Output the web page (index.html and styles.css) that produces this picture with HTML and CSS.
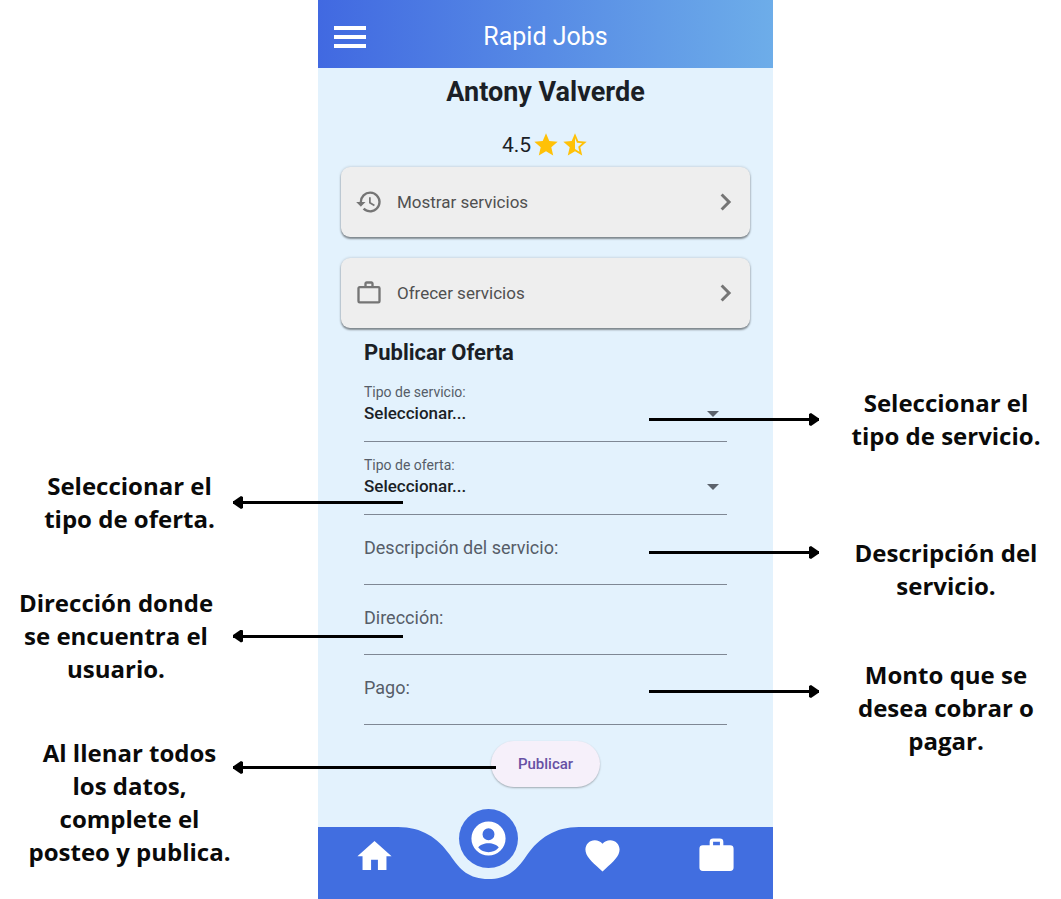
FILE: index.html
```html
<!DOCTYPE html>
<html lang="es">
<head>
<meta charset="utf-8">
<meta name="viewport" content="width=device-width, initial-scale=1">
<title>Rapid Jobs</title>
<link rel="stylesheet" href="styles.css">
</head>
<body>
<div class="guide">
  <aside class="notes notes-left">
    <div class="note note-offer">
      <p class="note-text">Seleccionar el<br>tipo de oferta.</p>
      <span class="arrow arrow-left"></span>
    </div>
    <div class="note note-address">
      <p class="note-text">Dirección donde<br>se encuentra el<br>usuario.</p>
      <span class="arrow arrow-left"></span>
    </div>
    <div class="note note-publish">
      <p class="note-text">Al llenar todos<br>los datos,<br>complete el<br>posteo y publica.</p>
      <span class="arrow arrow-left arrow-long"></span>
    </div>
  </aside>

  <main class="phone">
    <header class="topbar">
      <button class="menu" type="button" aria-label="Menú"><span class="bar"></span><span class="bar"></span><span class="bar"></span></button>
      <h1 class="brand">Rapid Jobs</h1>
    </header>

    <section class="profile">
      <h2 class="name">Antony Valverde</h2>
      <div class="rating">
        <span>4.5</span>
        <svg class="star" viewBox="0 0 24 24"><path d="M12 17.27 18.18 21l-1.64-7.03L22 9.24l-7.19-.61L12 2 9.19 8.63 2 9.24l5.46 4.73L5.82 21z"/></svg>
        <svg class="star" viewBox="0 0 24 24"><path d="m22 9.24-7.19-.62L12 2 9.19 8.63 2 9.24l5.46 4.73L5.82 21 12 17.27 18.18 21l-1.63-7.03L22 9.24zM12 15.4V6.1l1.71 4.04 4.38.38-3.32 2.88 1 4.28L12 15.4z"/></svg>
      </div>
    </section>

    <section class="cards">
      <button class="card" type="button">
        <svg class="card-icon" viewBox="0 0 24 24"><path d="M13 3a9 9 0 0 0-9 9H1l3.89 3.89.07.14L9 12H6a7 7 0 1 1 7 7 6.9 6.9 0 0 1-4.94-2.06l-1.42 1.42A9 9 0 1 0 13 3zm-1 5v5l4.28 2.54.72-1.21-3.5-2.08V8H12z"/></svg>
        <span class="card-label">Mostrar servicios</span>
        <svg class="chevron" viewBox="0 0 24 24"><path d="M5.500 19.700 8 22.200 18.200 12 8 1.800 5.500 4.300 13.200 12z"/></svg>
      </button>
      <button class="card" type="button">
        <svg class="card-icon" viewBox="0 0 24 24"><path fill-rule="evenodd" d="M14 6V4h-4v2h4zM4 8v11h16V8H4zm16-2a2 2 0 0 1 2 2v11a2 2 0 0 1-2 2H4a2 2 0 0 1-2-2V8c0-1.110.89-2 2-2h4V4c0-1.110.89-2 2-2h4c1.110 0 2 .89 2 2v2h4z"/></svg>
        <span class="card-label">Ofrecer servicios</span>
        <svg class="chevron" viewBox="0 0 24 24"><path d="M5.500 19.700 8 22.200 18.200 12 8 1.800 5.500 4.300 13.200 12z"/></svg>
      </button>
    </section>

    <form class="offer">
      <h3 class="offer-title">Publicar Oferta</h3>
      <div class="fields">
        <div class="select-field">
          <label class="small-label" for="servicio">Tipo de servicio:</label>
          <div class="select-wrap">
            <select class="select" id="servicio"><option>Seleccionar...</option></select>
            <span class="caret"></span>
          </div>
        </div>
        <div class="select-field">
          <label class="small-label" for="oferta">Tipo de oferta:</label>
          <div class="select-wrap">
            <select class="select" id="oferta"><option>Seleccionar...</option></select>
            <span class="caret"></span>
          </div>
        </div>
        <div class="text-field">
          <label class="label" for="descripcion">Descripción del servicio:</label>
          <input class="input" id="descripcion" type="text">
        </div>
        <div class="text-field">
          <label class="label" for="direccion">Dirección:</label>
          <input class="input" id="direccion" type="text">
        </div>
        <div class="text-field">
          <label class="label" for="pago">Pago:</label>
          <input class="input" id="pago" type="text">
        </div>
      </div>
      <button class="publish" type="button">Publicar</button>
    </form>

    <nav class="tabs">
      <svg class="tabs-shape" viewBox="0 0 455 72" preserveAspectRatio="none"><path d="M0 0H80C104 0 120 11 132 28C142 43 151 52 170.500 52C190 52 199 43 209 28C221 11 237 0 261 0H455V72H0Z"/></svg>
      <a class="tab" href="#" aria-label="Inicio"><svg viewBox="0 0 24 24"><path d="M10 20.500v-6h4v6h5v-8h3L12 3.500 2 12.500h3v8z"/></svg></a>
      <a class="tab tab-active" href="#" aria-label="Perfil"><span class="bubble"><svg viewBox="0 0 24 24"><path fill-rule="evenodd" d="M12 2a10 10 0 1 0 0 20 10 10 0 0 0 0-20zm0 4a3.500 3.500 0 1 1 0 7 3.500 3.500 0 0 1 0-7zm0 14a8 8 0 0 1-6-2.700c.9-1.500 3.400-2.500 6-2.500s5.100 1 6 2.500A8 8 0 0 1 12 20z"/></svg></span></a>
      <a class="tab" href="#" aria-label="Favoritos"><svg viewBox="0 0 24 24"><path d="m12 21.350-1.450-1.320C5.400 15.360 2 12.280 2 8.500 2 5.420 4.420 3 7.500 3c1.740 0 3.410.81 4.500 2.090C13.090 3.810 14.760 3 16.500 3 19.580 3 22 5.420 22 8.500c0 3.780-3.400 6.860-8.550 11.540L12 21.350z"/></svg></a>
      <a class="tab" href="#" aria-label="Trabajos"><svg viewBox="0 0 24 24"><path fill-rule="evenodd" d="M20 6h-4V4a2 2 0 0 0-2-2h-4a2 2 0 0 0-2 2v2H4a2 2 0 0 0-2 2v11a2 2 0 0 0 2 2h16a2 2 0 0 0 2-2V8a2 2 0 0 0-2-2zm-6 0h-4V4h4v2z"/></svg></a>
    </nav>
  </main>

  <aside class="notes notes-right">
    <div class="note note-service">
      <span class="arrow arrow-right"></span>
      <p class="note-text">Seleccionar el tipo de servicio.</p>
    </div>
    <div class="note note-description">
      <span class="arrow arrow-right"></span>
      <p class="note-text">Descripción del servicio.</p>
    </div>
    <div class="note note-payment">
      <span class="arrow arrow-right"></span>
      <p class="note-text">Monto que se desea cobrar o pagar.</p>
    </div>
  </aside>
</div>
</body>
</html>
```

FILE: styles.css
```css
* {
  box-sizing: border-box;
}

body {
  margin: 0;
  background: #fff;
  font-family: Roboto, "Liberation Sans", sans-serif;
  color: #1b1f26;
}

h1, h2, h3, p {
  margin: 0;
}

button, select, input {
  font: inherit;
  color: inherit;
}

svg {
  display: block;
  fill: currentColor;
}

.guide {
  display: grid;
  grid-template-columns: 318fr 455fr 288fr;
  min-height: 100vh;
}

/* Side notes */

.notes {
  display: flex;
  flex-direction: column;
  min-width: 0;
}

.notes-left {
  gap: 51px;
  padding: 469px 86px 0 0;
}

.notes-right {
  padding: 386px 12px 0 70px;
}

.note {
  position: relative;
}

.notes-left .note {
  padding: 0 0 0 27px;
}

.notes-left .note-address {
  padding: 0;
}

.note-description {
  margin-top: 84px;
}

.note-payment {
  margin-top: 56px;
}

.note-text {
  font: 700 24px/33px "Open Sans", "Noto Sans", sans-serif;
  color: #0a0a0a;
  text-align: center;
}

.arrow {
  position: absolute;
  z-index: 2;
  top: 50%;
  width: 170px;
  height: 3px;
  margin-top: -1px;
  background: #000;
}

.arrow::after {
  content: "";
  position: absolute;
  top: -5px;
  width: 10px;
  height: 13px;
  background: #000;
}

.arrow-left {
  left: 233px;
}

.arrow-left::after {
  left: 0;
  clip-path: polygon(0 42%, 80% 0, 100% 8%, 100% 92%, 80% 100%, 0 58%);
}

.arrow-right {
  right: 230px;
}

.arrow-right::after {
  right: 0;
  clip-path: polygon(100% 42%, 20% 0, 0 8%, 0 92%, 20% 100%, 100% 58%);
}

.arrow-long {
  width: 263px;
}

.note-publish .arrow {
  top: 31px;
}

.note-description .arrow {
  top: 16px;
}

.note-payment .arrow {
  top: 33px;
}

.notes-left .note-offer .note-text,
.notes-left .note-publish .note-text {
  white-space: nowrap;
}

/* App screen */

.phone {
  display: flex;
  flex-direction: column;
  min-width: 0;
  background: #e3f2fd;
}

.topbar {
  display: grid;
  grid-template-columns: 32px 1fr 32px;
  align-items: center;
  height: 68px;
  padding: 5px 16px 0;
  background: linear-gradient(90deg, #4169e1, #6dade9);
  color: #fff;
}

.menu {
  display: grid;
  gap: 5px;
  padding: 0;
  border: 0;
  background: none;
}

.bar {
  height: 4px;
  background: #fff;
}

.brand {
  font-size: 25px;
  font-weight: 400;
  line-height: 32px;
  text-align: center;
}

.profile {
  padding-top: 8px;
  text-align: center;
}

.name {
  font-size: 27px;
  font-weight: 700;
  line-height: 32px;
}

.rating {
  display: flex;
  justify-content: center;
  align-items: center;
  gap: 1px;
  height: 24px;
  margin-top: 25px;
  font-size: 21px;
}

.star {
  width: 28px;
  height: 28px;
  color: #ffc107;
}

.cards {
  display: grid;
  gap: 21px;
  padding: 10px 23px 0;
}

.card {
  display: flex;
  align-items: center;
  gap: 14px;
  height: 70px;
  padding: 0 12px 0 14px;
  border: 0;
  border-radius: 9px;
  background: #eee;
  box-shadow: 0 2px 2px rgba(0, 0, 0, .4), 0 0 3px rgba(0, 0, 0, .2);
  color: #505050;
  font-size: 17px;
  text-align: left;
}

.card-icon {
  width: 28px;
  height: 28px;
  color: #757575;
}

.card-label {
  flex: 1;
}

.chevron {
  width: 20px;
  height: 20px;
  margin-right: 2px;
  color: #757575;
}

.offer {
  display: flex;
  flex-direction: column;
  padding: 13px 46px 24px;
}

.offer-title {
  font-size: 22px;
  font-weight: 700;
  line-height: 24px;
}

.fields {
  display: grid;
  gap: 15px;
  margin-top: 19px;
}

.select-field,
.text-field {
  display: grid;
}

.text-field {
  padding-top: 6px;
}

.small-label {
  color: #565d68;
  font-size: 14px;
  line-height: 16px;
}

.label {
  color: #565d68;
  font-size: 18px;
  line-height: 24px;
}

.select-wrap {
  position: relative;
  display: grid;
}

.select,
.input {
  width: 100%;
  padding: 0;
  border: 0;
  border-bottom: 1px solid #7f8894;
  border-radius: 0;
  outline: 0;
  background: none;
}

.select {
  appearance: none;
  height: 42px;
  padding-bottom: 16px;
  font-size: 17px;
  font-weight: 500;
}

.input {
  height: 25px;
  font-size: 18px;
}

.caret {
  position: absolute;
  top: 11px;
  right: 8px;
  border: 6px solid transparent;
  border-top-color: #5c636c;
  border-bottom: 0;
  pointer-events: none;
}

.publish {
  align-self: center;
  height: 46px;
  margin-top: 16px;
  padding: 0 27px;
  border: 0;
  border-radius: 23px;
  background: #f6f0fa;
  box-shadow: 0 1px 2px rgba(0, 0, 0, .3);
  color: #6750a4;
  font-size: 15px;
  font-weight: 500;
}

.tabs {
  position: relative;
  display: grid;
  grid-template-columns: repeat(4, 1fr);
  height: 72px;
  margin-top: auto;
}

.tabs-shape {
  position: absolute;
  inset: 0;
  width: 100%;
  height: 100%;
  color: #416ee0;
}

.tab {
  position: relative;
  display: grid;
  place-items: center;
  align-content: start;
  padding-top: 8px;
  color: #fff;
}

.tab svg {
  width: 41px;
  height: 41px;
}

.tab-active {
  padding-top: 0;
}

.bubble {
  display: grid;
  place-items: center;
  width: 59px;
  height: 59px;
  margin-top: -18px;
  border-radius: 50%;
  background: #416ee0;
}
```
